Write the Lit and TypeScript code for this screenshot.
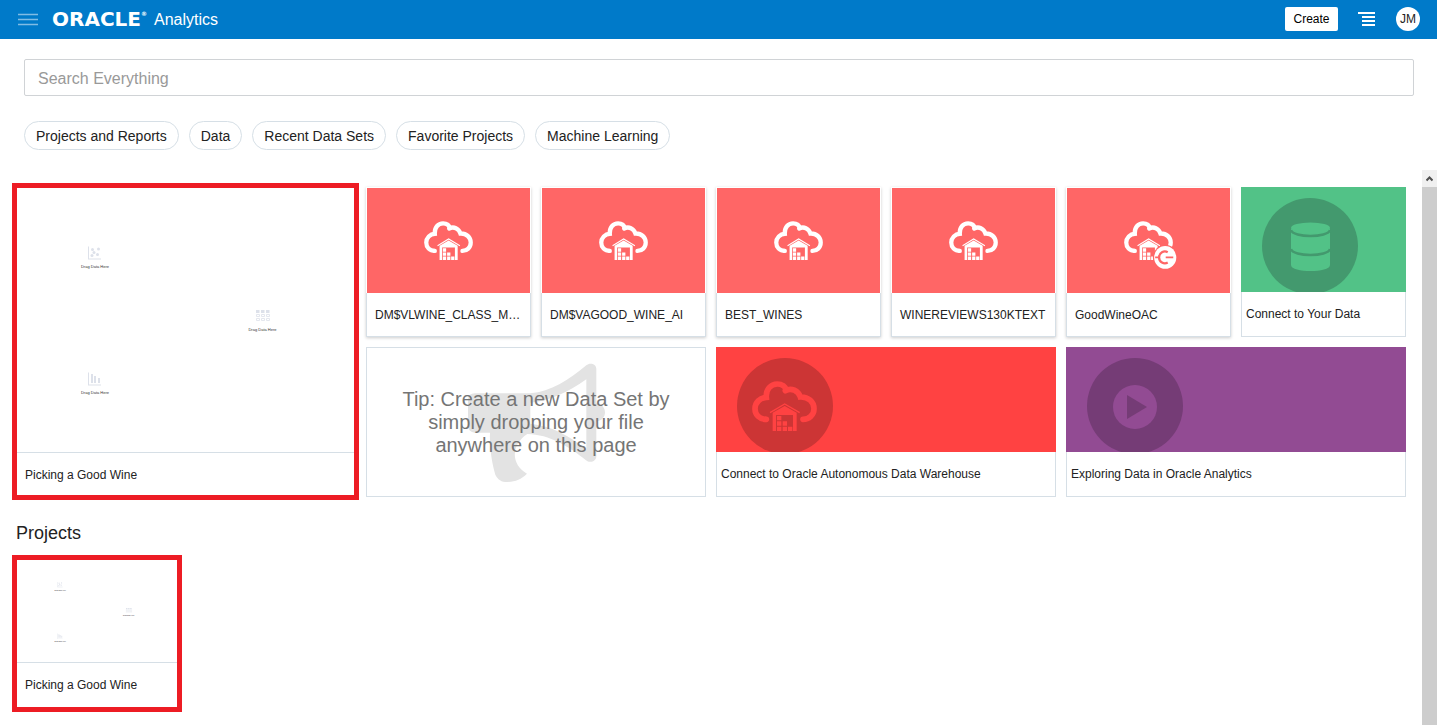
import { LitElement, html, svg, css, nothing } from "lit";
import { customElement, property } from "lit/decorators.js";
import { classMap } from "lit/directives/class-map.js";

const CHIPS = ["Projects and Reports", "Data", "Recent Data Sets", "Favorite Projects", "Machine Learning"];

const DATA_SETS = [
  { name: "DM$VLWINE_CLASS_MODEL" },
  { name: "DM$VAGOOD_WINE_AI" },
  { name: "BEST_WINES" },
  { name: "WINEREVIEWS130KTEXT" },
  { name: "GoodWineOAC", connection: true },
];

const warehouse = svg`
  <path d="M43 115C22 115 9 101 9 83C9 65 24 50 43 49C41 26 56 9 76 9C90 9 101 17 104 29" fill="none" stroke="currentColor" stroke-width="17"/>
  <circle cx="43" cy="115" r="8.500" fill="currentColor"/>
  <path d="M100 29C118 19 139 29 145 48C169 47 186 63 186 83C186 102 171 115 153 115" fill="none" stroke="currentColor" stroke-width="17" stroke-linecap="round"/>
  <path d="M54 95L98 69L143 95" fill="none" stroke="currentColor" stroke-width="4"/>
  <path d="M62 95L98 75L134 95V150H123V102H72V150H62Z" fill="currentColor"/>
  <path d="M75 105h13v13h-13zM75 121h13v13h-13zM92 121h13v13h-13zM75 137h13v13h-13zM92 137h13v13h-13zM108 137h13v13h-13z" fill="currentColor"/>`;

/** Miniature of an empty canvas with three placeholders. */
@customElement("canvas-preview")
class CanvasPreview extends LitElement {
  @property() view = "0 0 337 264";

  static styles = css`
    :host { display: block; overflow: hidden; }
    svg { display: block; width: 100%; height: 100%; }
    text { font-family: "Liberation Sans", Arial, sans-serif; font-size: 4px; fill: #333; text-anchor: middle; }
  `;

  render() {
    return html`<svg viewBox=${this.view} role="img" aria-label="Canvas preview">
      <g fill="#dde1ea">
        <path d="M71 58.500h1v12h12v1h-13z"/>
        <circle cx="75.500" cy="61.500" r="1.500"/><circle cx="81.500" cy="61" r="1.500"/>
        <circle cx="77" cy="64.500" r="1.500"/><circle cx="80.500" cy="66.500" r="1.500"/>
        <circle cx="75" cy="67.500" r="1.500"/>
        <path d="M71 184.500h1v12h12v1h-13zM74 186h2v9h-2zM77 188h2v7h-2zM81 190h2v5h-2z"/>
        <path d="M239 122h3.500v3h-3.500zM244 122h3.500v3h-3.500zM249 122h3.500v3h-3.500z"/>
      </g>
      <path d="M239.500 126.500h3v2h-3zM244.500 126.500h3v2h-3zM249.500 126.500h3v2h-3zM239.500 130.500h3v2h-3zM244.500 130.500h3v2h-3zM249.500 130.500h3v2h-3z" fill="none" stroke="#dde1ea" stroke-width=".8"/>
      <text x="78" y="80">Drag Data Here</text>
      <text x="245.500" y="142.500">Drag Data Here</text>
      <text x="78" y="205.500">Drag Data Here</text>
    </svg>`;
  }
}

@customElement("app-root")
class AppRoot extends LitElement {
  static styles = css`
    :host {
      display: flex; flex-direction: column; height: 100vh; overflow: hidden;
      background: #fff; color: #222;
      font-family: "Liberation Sans", Arial, sans-serif; font-size: 12px;
    }
    * { box-sizing: border-box; }
    button, input { font: inherit; color: inherit; margin: 0; }
    button { cursor: pointer; }
    a { color: inherit; text-decoration: none; }
    svg { display: block; }

    header { display: flex; align-items: center; height: 39px; flex: none; padding: 0 17px 1px 18px; background: #007ac9; color: #fff; }
    .icon-button { border: 0; padding: 0; background: none; }
    .brand { display: flex; align-items: center; margin-left: 14px; min-width: 102px; font-family: "DejaVu Sans", sans-serif; font-size: 20px; font-weight: bold; line-height: 22px; }
    .brand sup { align-self: flex-start; font-size: 6px; line-height: 12px; }
    .product { padding-top: 2px; font-size: 16px; line-height: 20px; }
    .actions { display: flex; align-items: center; gap: 20px; margin-left: auto; }
    .create { height: 24px; padding: 0 8px; min-width: 53px; border: 0; border-radius: 2px; background: #fff; color: #000; }
    .avatar { width: 24px; height: 24px; padding: 0; border: 0; border-radius: 50%; background: #fff; color: #222; }

    .search { display: block; margin: 20px 23px 0 24px; }
    .search input { display: block; width: 100%; height: 37px; padding: 2px 13px 0; border: 1px solid #d0d3d6; border-radius: 2px; font-size: 16px; background: #fff; }
    .search input::placeholder { color: #999; opacity: 1; }

    .chips { display: flex; flex-wrap: wrap; gap: 10px; margin: 25px 24px 20px; }
    .chips button { height: 29px; padding: 0 11px; border: 1px solid #d6dfe6; border-radius: 15px; background: #fff; font-size: 14px; }

    .scroller { display: flex; flex: 1; min-height: 0; }
    main { flex: 1; min-width: 0; overflow: hidden; padding: 17px 16px; }
    .scrollbar { display: flex; flex-direction: column; flex: none; width: 15px; background: #cdcdcd; }
    .scrollbar button { height: 17px; border: 0; padding: 0 4px; background: #f0f0f0; }

    .grid { display: grid; grid-template-columns: repeat(8, minmax(0, 1fr)); grid-auto-rows: 150px; gap: 10px; }
    .wide { grid-column: span 2; }

    .tile { display: flex; flex-direction: column; min-width: 0; }
    .banner { display: block; flex: none; height: 105px; }
    .label { flex: 1; border: 1px solid #d6dfe6; border-top: 0; padding: 0 4px; line-height: 44px; overflow: hidden; white-space: nowrap; text-overflow: ellipsis; }
    .dataset { box-shadow: 0 1px 3px rgba(0, 0, 0, 0.2); background: #fff; }
    .dataset .banner { display: grid; place-items: center; margin: 1px 1px 0; background: #ff6666; color: #fff; }
    .dataset .label { padding: 0 8px; }
    .cloud { width: 49px; height: 39px; overflow: visible; }

    .green { background: #52c287; color: #52c287; }
    .red { background: #ff4242; color: #ff4242; }
    .purple { background: #924b93; color: #924b93; }

    .tip { display: grid; place-items: center; border: 1px solid #d6dfe6; }
    .tip > * { grid-area: 1 / 1; }
    .tip p { margin: 0; max-width: 280px; z-index: 1; text-align: center; font-size: 20px; line-height: 23px; color: #757575; }

    .highlight { display: flex; flex-direction: column; border: 5px solid #ed1c24; margin: -4px -3px -3px -4px; }
    .highlight canvas-preview { flex: 1; min-height: 0; border-bottom: 1px solid #d6dfe6; }
    .highlight .name { flex: none; padding: 0 8px; line-height: 44px; }
    .featured { grid-column: span 2; grid-row: span 2; }
    .featured .name { padding-top: 2px; line-height: 40px; }
    h2 { margin: 26px 0 15px; font-size: 18px; font-weight: normal; line-height: 21px; }
    .project { margin-right: -1px; }
  `;

  dataSet(item: { name: string; connection?: boolean }) {
    return html`<a class="tile dataset" href="#" title=${item.name}>
      <span class="banner">
        <svg class="cloud" viewBox="0 0 195 150" preserveAspectRatio="none" aria-hidden="true">
          ${warehouse}
          ${item.connection
            ? svg`<circle cx="164" cy="140" r="49" fill="#ff6666"/>
                <circle cx="164" cy="140" r="44" fill="#fff"/>
                <path d="M174 120A23 23 0 1 0 174 160" fill="none" stroke="#ff6666" stroke-width="9"/>
                <path d="M124 140H142M166 140H196" fill="none" stroke="#ff6666" stroke-width="6"/>`
            : nothing}
        </svg>
      </span>
      <span class="label">${item.name}</span>
    </a>`;
  }

  promo(title: string, color: string, wide: boolean, shade: string, art: unknown) {
    return html`<a class=${classMap({ tile: true, wide })} href="#">
      <span class=${classMap({ banner: true, [color]: true })}>
        <svg width="140" height="105" aria-hidden="true">
          <circle cx="69" cy="59" r="48" fill=${shade} />
          ${art}
        </svg>
      </span>
      <span class="label">${title}</span>
    </a>`;
  }

  render() {
    return html`
      <header>
        <button class="icon-button" aria-label="Navigator">
          <svg width="20" height="14"><path d="M0 2.500H20M0 7.500H20M0 12.500H20" stroke="#80bce4" stroke-width="1.500"/></svg>
        </button>
        <span class="brand">ORACLE<sup>®</sup></span>
        <span class="product">Analytics</span>
        <div class="actions">
          <button class="create">Create</button>
          <button class="icon-button" aria-label="Page menu">
            <svg width="18" height="14"><path d="M0 1H17M4 5H17M4 9H17M4 13H17" stroke="#fff" stroke-width="2"/></svg>
          </button>
          <button class="avatar">JM</button>
        </div>
      </header>
      <label class="search"><input type="search" placeholder="Search Everything" aria-label="Search Everything" /></label>
      <nav class="chips">${CHIPS.map((chip) => html`<button>${chip}</button>`)}</nav>
      <div class="scroller">
        <main>
          <section class="grid">
            <a class="highlight featured" href="#">
              <canvas-preview></canvas-preview>
              <span class="name">Picking a Good Wine</span>
            </a>
            ${DATA_SETS.map((item) => this.dataSet(item))}
            ${this.promo("Connect to Your Data", "green", false, "#43996e", svg`
              <path d="M50 42V78C50 86 89 86 89 78V42Z" fill="currentColor"/>
              <ellipse cx="69.500" cy="41" rx="19.500" ry="5.500" fill="currentColor"/>
              <path d="M50 43C52 51 87 51 89 43M50 62C52 70 87 70 89 62" fill="none" stroke="#43996e" stroke-width="2.500"/>`)}
            <div class="tip wide">
              <svg width="137" height="119" viewBox="0 0 411 357" aria-hidden="true">
                <path fill="#e3e3e3" fill-rule="evenodd" d="M20 91H187C250 86 300 52 355 7C365 -2 385 2 385 18V120C402 123 411 135 411 148C411 162 402 173 385 176V280C385 296 365 302 353 291C305 252 245 214 178 213C128 245 128 305 177 332C158 350 140 357 112 357C95 355 87 345 82 335C72 300 64 255 66 209H20Q2 207 0 190V108Q2 92 20 91ZM187 119V182C250 188 308 220 355 260V49C300 88 242 115 187 119Z"/>
              </svg>
              <p>Tip: Create a new Data Set by simply dropping your file anywhere on this page</p>
            </div>
            ${this.promo("Connect to Oracle Autonomous Data Warehouse", "red", true, "#cc3535", svg`
              <svg x="36" y="34" width="65" height="50" viewBox="0 0 195 150">${warehouse}</svg>`)}
            ${this.promo("Exploring Data in Oracle Analytics", "purple", true, "#753c76", svg`
              <circle cx="69" cy="60" r="22" fill="currentColor"/>
              <path d="M61 48L81 60L61 72Z" fill="#753c76"/>`)}
          </section>
          <h2>Projects</h2>
          <section class="grid">
            <a class="highlight project" href="#">
              <canvas-preview view="-27 5 390 249"></canvas-preview>
              <span class="name">Picking a Good Wine</span>
            </a>
          </section>
        </main>
        <div class="scrollbar">
          <button aria-label="Scroll up"><svg width="7" height="6"><path d="M.5 4.500L3.500 1.500L6.500 4.500" fill="none" stroke="#505050" stroke-width="2"/></svg></button>
        </div>
      </div>
    `;
  }
}
